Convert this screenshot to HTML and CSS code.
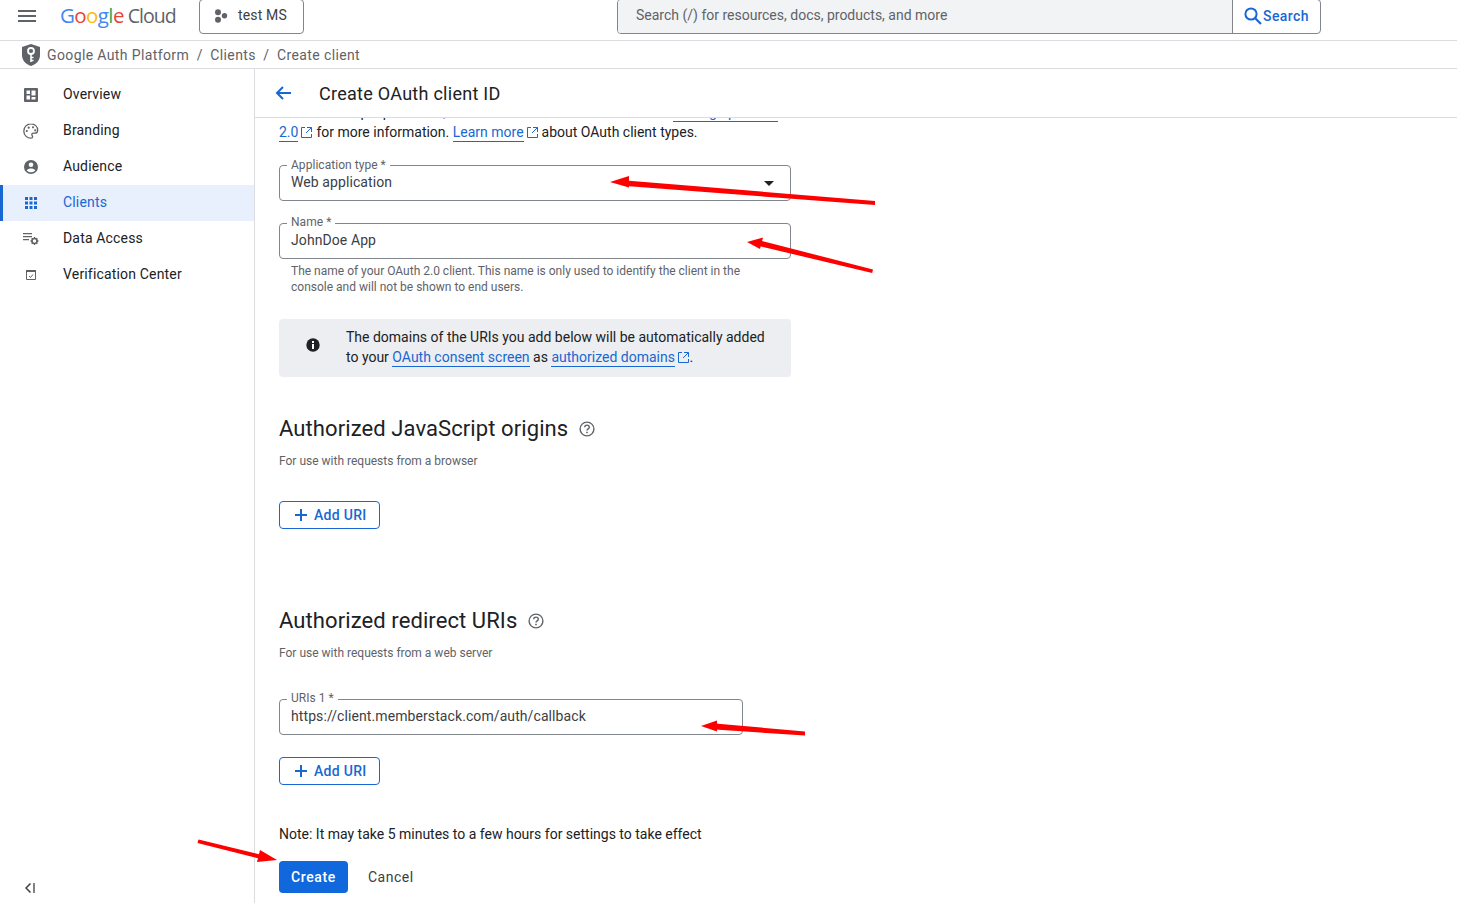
FILE: index.html
```html
<!DOCTYPE html>
<html lang="en">
<head>
<meta charset="utf-8">
<title>Create OAuth client ID</title>
<link rel="stylesheet" href="styles.css">
</head>
<body>
<header class="topbar">
  <svg class="menu-icon" viewBox="0 0 18 12" width="18" height="12"><path d="M0 0h18v2H0zM0 5h18v2H0zM0 10h18v2H0z"/></svg>
  <div class="logo"><span class="g-b">G</span><span class="g-r">o</span><span class="g-y">o</span><span class="g-b">g</span><span class="g-g">l</span><span class="g-r">e</span><span class="cloud">Cloud</span></div>
  <div class="project">
    <svg viewBox="0 0 14 14" width="14" height="14"><circle cx="4" cy="3.300" r="3"/><circle cx="10.500" cy="6.800" r="2.700"/><circle cx="4" cy="10.700" r="3"/></svg>
    <span>test MS</span>
  </div>
  <div class="search">
    <div class="search-input">Search (/) for resources, docs, products, and more</div>
    <div class="search-btn">
      <svg viewBox="0 0 18 18" width="18" height="18"><circle cx="7" cy="7" r="5.600" fill="none" stroke="#1967d2" stroke-width="2"/><path d="M11 11l6 6" stroke="#1967d2" stroke-width="2.200"/></svg>
      <span>Search</span>
    </div>
  </div>
</header>
<nav class="crumbs">
  <svg class="shield" viewBox="0 0 18 22" width="18" height="22"><path fill="#5f6368" d="M9 0l9 3v8c0 5.500-3.800 9.300-9 11-5.200-1.700-9-5.500-9-11V3z"/><circle cx="9" cy="7" r="3" fill="none" stroke="#fff" stroke-width="1.800"/><path d="M9 10v8M9 13.500h2.500M9 16.500h2.500" stroke="#fff" stroke-width="1.600" fill="none"/></svg>
  <span>Google Auth Platform</span><i>/</i><span>Clients</span><i>/</i><span>Create client</span>
</nav>
<div class="body">
  <aside class="sidebar">
    <a class="nav-item">
      <svg viewBox="0 0 14 14" width="14" height="14"><path fill="#5f6368" fill-rule="evenodd" d="M1 0h12a1 1 0 0 1 1 1v12a1 1 0 0 1-1 1H1a1 1 0 0 1-1-1V1a1 1 0 0 1 1-1zM2.500 2.500v3.500h3.500V2.500zM7.500 2.500v5h4v-5zM2.500 7.500v4h3.500v-4zM7.500 9v2.500h4V9z"/></svg>
      <span>Overview</span>
    </a>
    <a class="nav-item">
      <svg viewBox="0 0 16 16" width="16" height="16"><path fill="none" stroke="#5f6368" stroke-width="1.300" d="M8 .8C4 .8.8 4 .8 8s3.200 7.200 7.200 7.200c1 0 1.600-.7 1.600-1.500 0-1-.8-1.200-.8-2.100 0-.9.700-1.400 1.500-1.400h1.500c1.700 0 2.900-1.300 2.900-3C14.700 3.500 11.700.8 8 .8z"/><circle cx="3.800" cy="8" r="1.100" fill="#5f6368"/><circle cx="5.700" cy="4.700" r="1.100" fill="#5f6368"/><circle cx="10" cy="4.300" r="1.100" fill="#5f6368"/><circle cx="12.200" cy="7.300" r="1.100" fill="#5f6368"/></svg>
      <span>Branding</span>
    </a>
    <a class="nav-item">
      <svg viewBox="0 0 14 14" width="14" height="14"><path fill="#5f6368" fill-rule="evenodd" d="M7 0a7 7 0 1 1 0 14A7 7 0 0 1 7 0zM7 2.500a2.300 2.300 0 1 0 0 4.600 2.300 2.300 0 0 0 0-4.600zM7 12.300c1.700 0 3.300-.8 4.300-2.100C10.300 9 8.600 8.500 7 8.500s-3.300.5-4.300 1.700c1 1.300 2.600 2.100 4.300 2.100z"/></svg>
      <span>Audience</span>
    </a>
    <a class="nav-item active">
      <svg viewBox="0 0 12 12" width="12" height="12"><path fill="#1967d2" d="M0 0h3v3H0zM4.500 0h3v3h-3zM9 0h3v3H9zM0 4.500h3v3H0zM4.500 4.500h3v3h-3zM9 4.500h3v3H9zM0 9h3v3H0zM4.500 9h3v3h-3zM9 9h3v3H9z"/></svg>
      <span>Clients</span>
    </a>
    <a class="nav-item">
      <svg viewBox="0 0 16 13" width="16" height="13"><path fill="#5f6368" d="M0 .5h9v1.200H0zM0 3.500h9v1.200H0zM0 6.500h6v1.200H0z"/><circle cx="11.500" cy="8.500" r="2.500" fill="none" stroke="#5f6368" stroke-width="1.600"/><path stroke="#5f6368" stroke-width="1.300" d="M11.500 4.500v1.500M11.500 11v1.500M7.500 8.500H9M14 8.500h1.500M8.700 5.700l1 1M13.300 10.300l1 1M8.700 11.300l1-1M13.300 6.700l1-1"/></svg>
      <span>Data Access</span>
    </a>
    <a class="nav-item">
      <svg viewBox="0 0 10 10" width="10" height="10"><path fill="none" stroke="#5f6368" d="M.5.500h9v9h-9z"/><path fill="#5f6368" d="M0 0h10v2H0z"/><path fill="none" stroke="#5f6368" d="M3 6l1.500 1.500L7 4.500"/></svg>
      <span>Verification Center</span>
    </a>
    <svg class="collapse" viewBox="0 0 10 10" width="10" height="10"><path fill="none" stroke="#3c4043" stroke-width="1.500" d="M5.500.5L1 5l4.500 4.500"/><path fill="none" stroke="#5f6368" stroke-width="1.600" d="M9 0v10"/></svg>
  </aside>
  <main class="main">
    <div class="page-head">
      <svg viewBox="0 0 16 14" width="16" height="14"><path fill="none" stroke="#1967d2" stroke-width="2" d="M16 7H2M8 1L2 7l6 6"/></svg>
      <h1>Create OAuth client ID</h1>
    </div>
    <div class="scroller">
      <div class="form">
        <p class="intro">Client IDs are used to identify a single app to Google's OAuth servers. If your app runs on multiple platforms, each will need its own client ID. See <a>Setting up OAuth 2.0</a><svg class="ext" viewBox="0 0 11 11" width="11" height="11"><path d="M4 .5H.5v10h10V7M6 .5h4.500V5M10.500.5L5 6"/></svg> for more information. <a>Learn more</a><svg class="ext" viewBox="0 0 11 11" width="11" height="11"><path d="M4 .5H.5v10h10V7M6 .5h4.500V5M10.500.5L5 6"/></svg> about OAuth client types.</p>

        <div class="field first">
          <label>Application type *</label>
          <div class="value">Web application</div>
          <span class="caret"></span>
        </div>
        <div class="field second">
          <label>Name *</label>
          <div class="value">JohnDoe App</div>
        </div>
        <p class="hint">The name of your OAuth 2.0 client. This name is only used to identify the client in the console and will not be shown to end users.</p>

        <div class="notice">
          <svg viewBox="0 0 14 14" width="14" height="14"><circle cx="7" cy="7" r="6.700" fill="#202124"/><path fill="#fff" d="M6 6h2v5H6zM6 3h2v2H6z"/></svg>
          <p>The domains of the URIs you add below will be automatically added to your <a>OAuth consent screen</a> as <a>authorized domains</a><svg class="ext" viewBox="0 0 11 11" width="11" height="11"><path d="M4 .5H.5v10h10V7M6 .5h4.500V5M10.500.5L5 6"/></svg>.</p>
        </div>

        <div class="section-title js-title">
          <h2>Authorized JavaScript origins</h2>
          <svg viewBox="0 0 16 16" width="16" height="16"><circle cx="8" cy="8" r="6.900" fill="none" stroke="#5f6368" stroke-width="1.400"/><path fill="none" stroke="#5f6368" stroke-width="1.400" d="M5.700 6.300c0-1.300 1-2.200 2.300-2.200s2.300.9 2.300 2.100c0 1.600-2.300 1.700-2.300 3.300"/><path fill="#5f6368" d="M7.200 10.700h1.600v1.500H7.200z"/></svg>
        </div>
        <p class="sub">For use with requests from a browser</p>
        <button class="add-btn add-js"><svg viewBox="0 0 12 12" width="12" height="12"><path fill="#1967d2" d="M5 0h2v5h5v2H7v5H5V7H0V5h5z"/></svg><span>Add URI</span></button>

        <div class="section-title redirect-title">
          <h2>Authorized redirect URIs</h2>
          <svg viewBox="0 0 16 16" width="16" height="16"><circle cx="8" cy="8" r="6.900" fill="none" stroke="#5f6368" stroke-width="1.400"/><path fill="none" stroke="#5f6368" stroke-width="1.400" d="M5.700 6.300c0-1.300 1-2.200 2.300-2.200s2.300.9 2.300 2.100c0 1.600-2.300 1.700-2.300 3.300"/><path fill="#5f6368" d="M7.200 10.700h1.600v1.500H7.200z"/></svg>
        </div>
        <p class="sub">For use with requests from a web server</p>
        <div class="field uri">
          <label>URIs 1 *</label>
          <div class="value">https://client.memberstack.com/auth/callback</div>
        </div>
        <button class="add-btn add-redirect"><svg viewBox="0 0 12 12" width="12" height="12"><path fill="#1967d2" d="M5 0h2v5h5v2H7v5H5V7H0V5h5z"/></svg><span>Add URI</span></button>

        <p class="note">Note: It may take 5 minutes to a few hours for settings to take effect</p>
        <div class="actions">
          <button class="create">Create</button>
          <button class="cancel">Cancel</button>
        </div>
      </div>
    </div>
  </main>
</div>
<svg class="arrows" viewBox="0 0 1457 903" width="1457" height="903">
  <path d="M610 182l19-6v11.500z"/>
  <path d="M626 180.500L875 201v4L626 186z"/>
  <path d="M747 242l16-4.500-3 11.500z"/>
  <path d="M760 240.500L873 269.500l-.8 3.500L759 246z"/>
  <path d="M701 726l16-5.500v11z"/>
  <path d="M715 723.500l90 8v4L715 729.500z"/>
  <path d="M277 860l-20 2 3-12z"/>
  <path d="M198.500 839.500L262 855l-1 4L197.500 843z"/>
</svg>
</body>
</html>
```
FILE: styles.css
```css
* { box-sizing: border-box; }
html, body { margin: 0; height: 100%; overflow: hidden; }
body {
  position: relative;
  font-family: Roboto, "Liberation Sans", sans-serif;
  font-size: 14px;
  color: #202124;
  background: #fff;
  display: flex;
  flex-direction: column;
}
p, h1, h2 { margin: 0; font-weight: 400; }
a { color: #1967d2; border-bottom: 1px solid #1967d2; padding-bottom: 1px; }

.topbar {
  height: 41px;
  flex: none;
  display: flex;
  align-items: flex-start;
  border-bottom: 1px solid #dadce0;
  padding-left: 18px;
}
.menu-icon { fill: #5f6368; margin-top: 10px; flex: none; }
.logo {
  margin-left: 24px;
  margin-top: 1px;
  width: 139px;
  font-family: "Open Sans", sans-serif;
  font-size: 20.5px;
  line-height: 28px;
  letter-spacing: -.6px;
  white-space: nowrap;
}
.g-b { color: #4285f4; }
.g-r { color: #ea4335; }
.g-y { color: #fbbc04; }
.g-g { color: #34a853; }
.cloud { color: #5f6368; margin-left: 4px; font-size: 19.5px; letter-spacing: -1px; }
.project {
  width: 105px;
  height: 35px;
  margin-top: -1px;
  border: 1px solid #80868b;
  border-radius: 4px;
  display: flex;
  align-items: center;
  padding: 0 0 2px 14px;
  gap: 10px;
  color: #3c4043;
  letter-spacing: .15px;
}
.project span { margin-top: -2px; }
.project svg { fill: #5f6368; }
.search {
  margin-left: 313px;
  width: 704px;
  height: 35px;
  margin-top: -1px;
  border: 1px solid #80868b;
  border-radius: 4px;
  display: flex;
  overflow: hidden;
}
.search-input {
  flex: 1;
  background: #f1f3f4;
  color: #5f6368;
  padding: 0 18px;
  line-height: 31px;
  border-right: 1px solid #80868b;
}
.search-btn {
  width: 87px;
  display: flex;
  align-items: center;
  padding: 0 0 2px 11px;
  gap: 1px;
  color: #1967d2;
  font-weight: 500;
  letter-spacing: .4px;
}

.crumbs {
  height: 28px;
  flex: none;
  display: flex;
  align-items: center;
  border-bottom: 1px solid #dadce0;
  padding-left: 22px;
  color: #5f6368;
  font-size: 14px;
  letter-spacing: .38px;
}
.shield { margin-right: 7px; }
.crumbs i { font-style: normal; margin: 0 7.5px; }

.body { flex: 1; display: flex; min-height: 0; }
.sidebar {
  width: 255px;
  flex: none;
  position: relative;
  border-right: 1px solid #dadce0;
  padding-top: 8px;
}
.nav-item {
  display: flex;
  align-items: center;
  height: 36px;
  border: 0;
  color: #202124;
  position: relative;
  padding: 0 0 2px 63px;
  letter-spacing: .17px;
}
.nav-item svg {
  position: absolute;
  left: 31px;
  top: 50%;
  transform: translate(-50%, -50%);
}
.nav-item.active {
  background: #e8f0fe;
  color: #1967d2;
  border-left: 3px solid #1967d2;
  padding-left: 60px;
}
.nav-item.active svg { left: 28px; }
.collapse { position: absolute; left: 25px; bottom: 10px; }

.main { flex: 1; display: flex; flex-direction: column; min-width: 0; }
.page-head {
  height: 49px;
  flex: none;
  display: flex;
  align-items: center;
  border-bottom: 1px solid #dadce0;
  padding-left: 20px;
}
.page-head h1 { font-size: 18px; margin-left: 28px; color: #202124; letter-spacing: .27px; }
.scroller { flex: 1; overflow: hidden; min-height: 0; }
.form { width: 536px; padding-left: 24px; margin-top: -36px; }
.intro { line-height: 20px; }
.ext { fill: none; stroke: #1967d2; stroke-width: 1; margin: 0 .5px 0 3px; vertical-align: -1px; }

.field {
  position: relative;
  height: 36px;
  width: 512px;
  border: 1px solid #80868b;
  border-radius: 4px;
  padding: 0 11px;
  display: flex;
  align-items: center;
  color: #3c4043;
}
.field label {
  position: absolute;
  left: 7px;
  top: -9px;
  padding: 0 4px;
  font-size: 12px;
  line-height: 14px;
  color: #5f6368;
  background: #fff;
  letter-spacing: .04px;
}
.field.first label { top: -8px; }
.field .value { margin-top: -2px; letter-spacing: .09px; }
.field.first { margin-top: 23px; }
.field.second { margin-top: 22px; }
.field.uri { width: 464px; margin-top: 38px; }
.caret {
  position: absolute;
  right: 16px;
  top: 15px;
  border-left: 5px solid transparent;
  border-right: 5px solid transparent;
  border-top: 5px solid #202124;
}
.hint {
  margin-top: 4px;
  padding: 0 40px 0 12px;
  font-size: 12px;
  line-height: 16px;
  color: #5f6368;
}
.notice {
  margin-top: 24px;
  width: 512px;
  height: 58px;
  background: #eceef1;
  border-radius: 4px;
  display: flex;
  align-items: center;
  padding: 0 24px 0 27px;
  gap: 26px;
}
.notice svg:first-child { flex: none; margin-bottom: 6px; }
.notice p { line-height: 20px; margin-top: -2px; }
.section-title { display: flex; align-items: center; gap: 11px; }
.section-title h2 { font-size: 22px; line-height: 32px; letter-spacing: .09px; }
.js-title { margin-top: 36px; }
.redirect-title { margin-top: 76px; }
.sub { margin-top: 8px; font-size: 12px; line-height: 16px; color: #5f6368; }
.add-btn {
  display: flex;
  align-items: center;
  gap: 7px;
  width: 101px;
  height: 28px;
  padding: 0 0 0 15px;
  background: #fff;
  border: 1px solid #1967d2;
  border-radius: 4px;
  color: #1967d2;
  font: 500 14px Roboto, sans-serif;
  letter-spacing: .3px;
}
.add-js { margin-top: 32px; }
.add-redirect { margin-top: 22px; }
.note { margin-top: 39px; line-height: 20px; }
.actions { display: flex; align-items: center; gap: 20px; margin-top: 17px; }
.create {
  width: 69px;
  height: 32px;
  background: #1068dc;
  color: #fff;
  border: 0;
  border-radius: 4px;
  font: 500 14px Roboto, sans-serif;
  letter-spacing: .65px;
}
.cancel {
  background: none;
  border: 0;
  padding: 0;
  color: #3c4043;
  font: 400 14px Roboto, sans-serif;
  letter-spacing: .5px;
}
.arrows { position: absolute; left: 0; top: 0; pointer-events: none; fill: #f00; }
```
